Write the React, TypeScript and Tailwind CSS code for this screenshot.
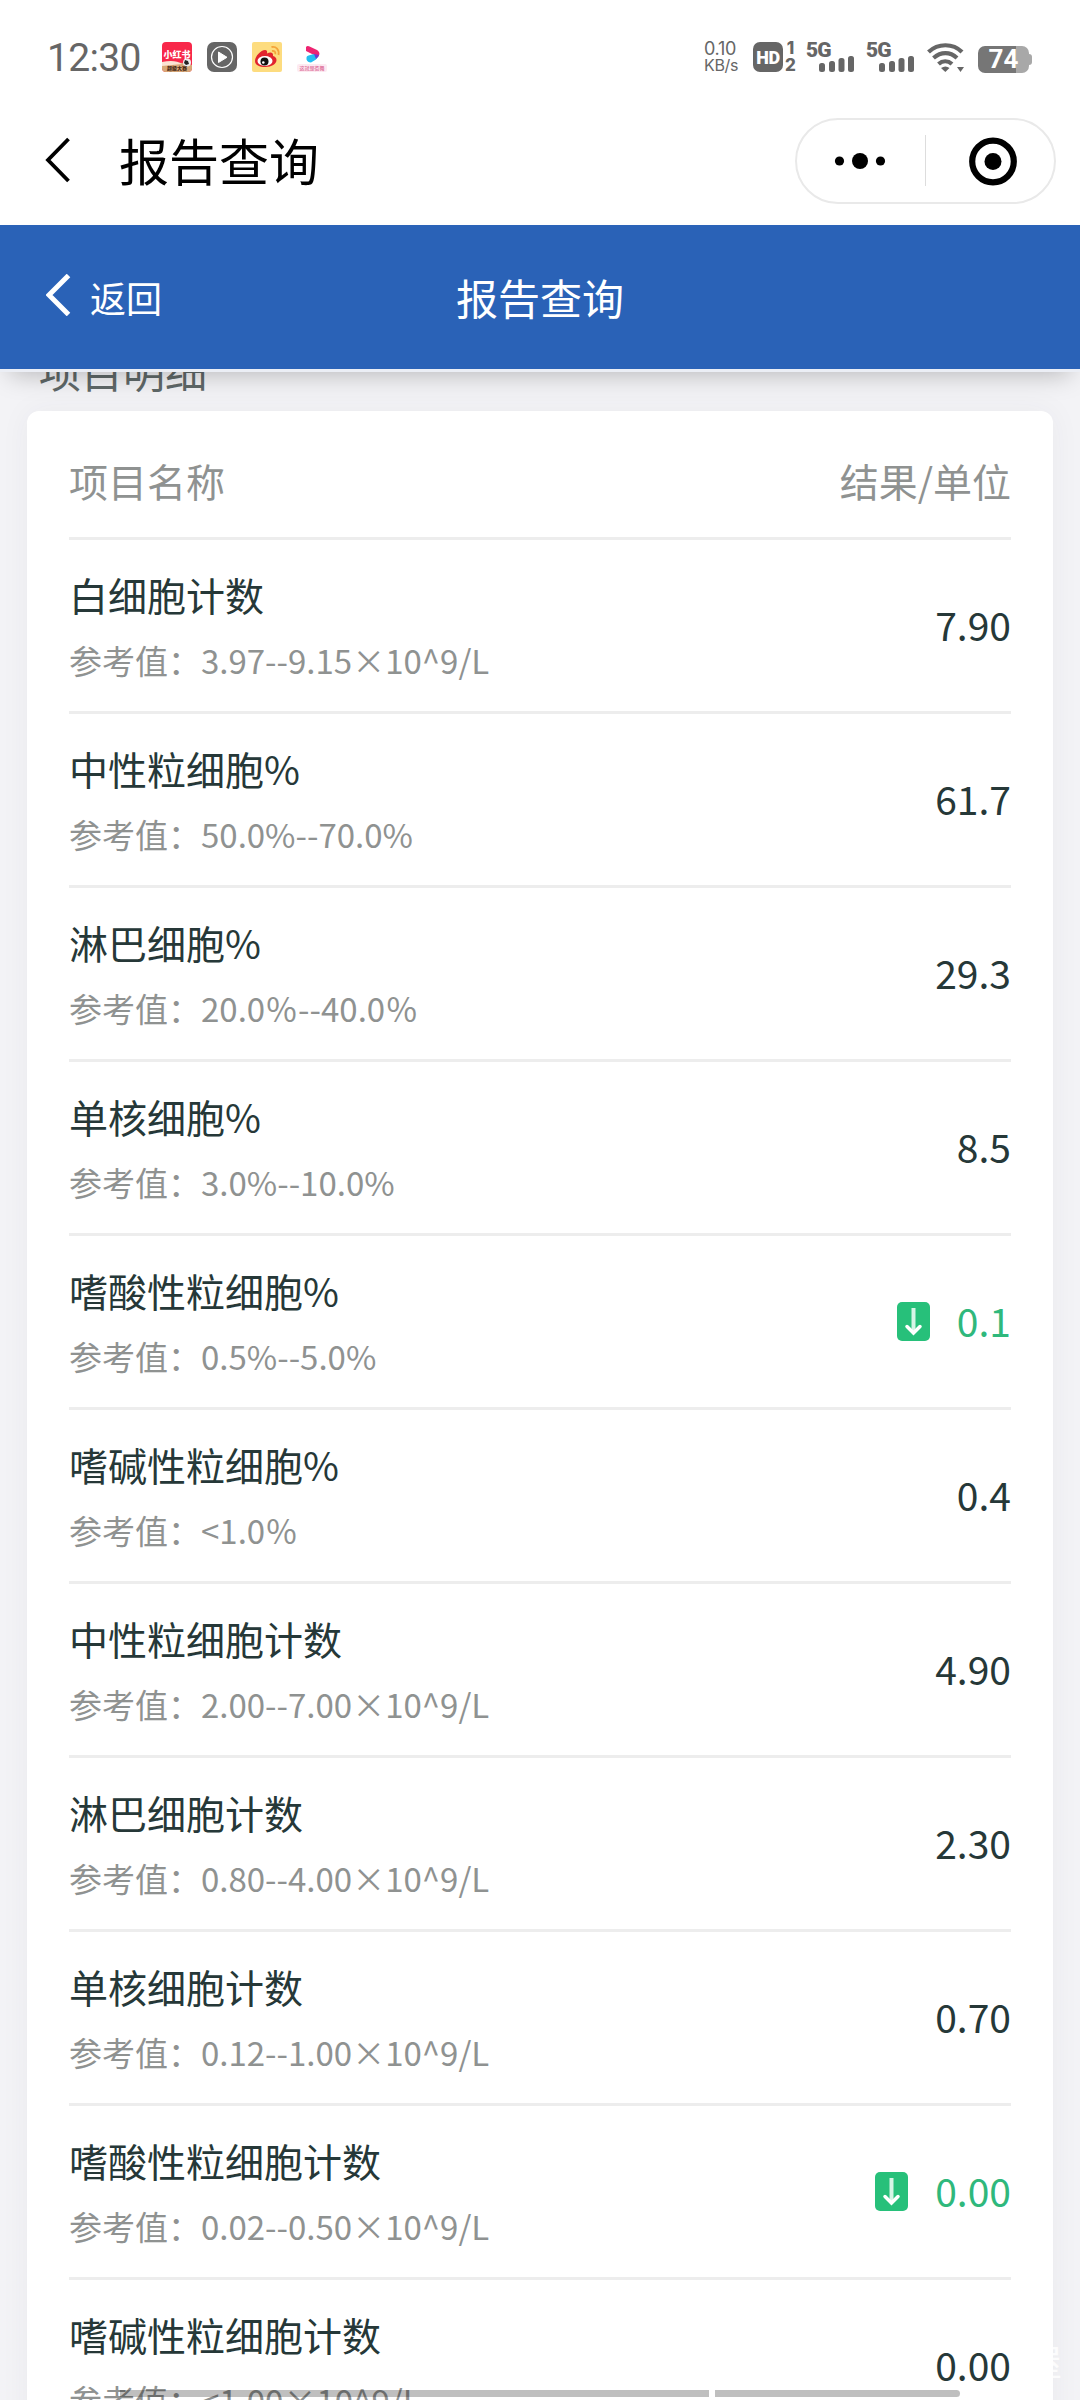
import clsx from "clsx";

type Item = { name: string; range: string; value: string; low?: boolean };

const items: Item[] = [
  { name: "白细胞计数", range: "3.97--9.15×10^9/L", value: "7.90" },
  { name: "中性粒细胞%", range: "50.0%--70.0%", value: "61.7" },
  { name: "淋巴细胞%", range: "20.0％--40.0％", value: "29.3" },
  { name: "单核细胞%", range: "3.0%--10.0%", value: "8.5" },
  { name: "嗜酸性粒细胞%", range: "0.5%--5.0%", value: "0.1", low: true },
  { name: "嗜碱性粒细胞%", range: "<1.0％", value: "0.4" },
  { name: "中性粒细胞计数", range: "2.00--7.00×10^9/L", value: "4.90" },
  { name: "淋巴细胞计数", range: "0.80--4.00×10^9/L", value: "2.30" },
  { name: "单核细胞计数", range: "0.12--1.00×10^9/L", value: "0.70" },
  { name: "嗜酸性粒细胞计数", range: "0.02--0.50×10^9/L", value: "0.00", low: true },
  { name: "嗜碱性粒细胞计数", range: "<1.00×10^9/L", value: "0.00" },
];

function Signal() {
  return (
    <div className="relative h-[30px] w-[48px]">
      <span className="absolute -top-[1px] -left-px font-['Roboto',sans-serif] text-[21px] leading-[18px] font-black tracking-[-0.8px]">5G</span>
      <svg viewBox="0 0 48 30" className="absolute inset-0" fill="currentColor">
        <rect x="12" y="21" width="6" height="9" rx="2.5" />
        <rect x="22" y="19" width="6" height="11" rx="2.5" />
        <rect x="31.500" y="16" width="6" height="14" rx="2.5" />
        <rect x="41" y="14" width="6" height="16" rx="2.5" />
      </svg>
    </div>
  );
}

function AppIcons() {
  return (
    <div className="flex gap-[15px]">
      <svg viewBox="0 0 30 30" className="size-[30px]">
        <defs>
          <clipPath id="rednote"><rect width="30" height="30" rx="4" /></clipPath>
        </defs>
        <g clipPath="url(#rednote)">
          <rect width="30" height="30" fill="#f8284a" />
          <path d="M0 22Q13 18 30 23V30H0Z" fill="#d8a878" />
          <path d="M0 20Q13 17 20 22L0 24Z" fill="#fbe3d3" />
          <circle cx="25" cy="20.500" r="4" fill="#eee" />
          <path d="M23 18l3 1 1 3-3 1-2-2z" fill="#222" />
        </g>
        <text x="15" y="15.500" textAnchor="middle" fontSize="9" fontWeight="900" fill="#fff" fontFamily="Noto Sans CJK SC">小红书</text>
        <text x="15" y="28" textAnchor="middle" fontSize="5" fontWeight="900" fill="#4a2c17" fontFamily="Noto Sans CJK SC">超级大赛</text>
      </svg>
      <svg viewBox="0 0 30 30" className="size-[30px]">
        <rect width="30" height="30" rx="7" fill="#666" />
        <circle cx="15" cy="15" r="10.500" fill="none" stroke="#fff" strokeWidth="1.200" />
        <path d="M11.500 10v10.500l8.500-5.200z" fill="#fff" stroke="#fff" strokeLinejoin="round" />
      </svg>
      <svg viewBox="0 0 30 30" className="size-[30px]">
        <rect width="30" height="30" rx="2" fill="#fddc7f" />
        <path d="M3 19C3 14 9 8 13 8c2 0 2.500 1.500 2 3.500 3-1.500 6.500-1.500 6 2.500 2 .6 3.500 2 3.500 4 0 4-5 7-11 7S3 23 3 19Z" fill="#e1232e" />
        <ellipse cx="13" cy="19" rx="7.500" ry="5" fill="#fff" />
        <circle cx="12.500" cy="19.500" r="4" fill="#111" />
        <circle cx="11.300" cy="20.500" r="1.300" fill="#fff" />
        <path d="M19.500 5c4.500-1 8 2.500 7 8M20 9c2.500-.5 3.800 1 3.300 3.300" fill="none" stroke="#f4a43a" strokeWidth="1.800" />
      </svg>
      <svg viewBox="0 0 30 30" className="size-[30px]">
        <rect y="22" width="30" height="8" rx="2" fill="#fdeaf1" />
        <path d="M9 5q1-1.500 3-.8L20 8q3 2 2.300 4.500L21 15 9 9Z" fill="#ee2471" />
        <path d="M9.500 15.500q0-1.500 2-2L17 12l4 2.500-2 3-5 3q-3.500 0-4.500-3Z" fill="#24bff0" />
        <path d="M17 12l5 1q-.5 2.500-3 4z" fill="#6b3bd0" />
        <text x="15" y="27.500" textAnchor="middle" fontSize="5" fontWeight="500" fill="#dc6c98" fontFamily="Noto Sans CJK SC">这就是街舞</text>
      </svg>
    </div>
  );
}

function StatusBar() {
  return (
    <div className="flex h-[115px] items-start justify-between pr-12 pl-[47px] text-[#666]">
      <div className="flex items-start pt-[42px]">
        <span className="w-[115px] pt-px font-['Roboto',sans-serif] text-[39px] leading-[30px] tracking-[-0.7px]">12:30</span>
        <AppIcons />
      </div>
      <div className="flex pt-[42px]">
        <div className="mr-[14px] w-[35px] font-['Inter',sans-serif] text-[18px] leading-[16px] tracking-[-0.3px] whitespace-nowrap">
          <div className="-mt-px">0.10</div>
          <div className="text-[16px]">KB/s</div>
        </div>
        <div className="flex size-[30px] items-center justify-center rounded-[7px] bg-[#666] font-['Roboto',sans-serif] text-[18px] font-black tracking-[-0.5px] text-white">
          HD
        </div>
        <div className="mr-[11px] ml-0.5 w-[11px] text-center font-['Inter',sans-serif] text-[17px] leading-[17px] font-extrabold">
          <div className="-mt-0.5">1</div>
          <div>2</div>
        </div>
        <div className="mr-[12px]"><Signal /></div>
        <Signal />
        <svg viewBox="0 0 38 30" className="ml-[12px] h-[30px] w-[38px]" fill="none" stroke="currentColor" strokeWidth="4.200">
          <path d="M1.500 10C11 1 26 1 35 10" />
          <path d="M6.500 16C14 9.500 23 9.500 30 16" />
          <path d="M11.500 22C15.500 18.500 21 18.500 25 22" />
          <path d="M14 26q4.500-3 8.500 0l-4.200 4z" fill="currentColor" stroke="none" />
          <path d="M30 25h7l-3.500 5z" fill="currentColor" stroke="none" />
        </svg>
        <div className="mt-[3px] ml-[13px] flex items-center">
          <div className="flex h-[27px] w-[51px] items-center justify-center rounded-[7px] bg-[linear-gradient(90deg,#767676_38px,#a8a8a8_38px)] font-['Roboto',sans-serif] text-[26px] font-bold text-white">
            74
          </div>
          <div className="h-[11px] w-[3px] rounded-r-sm bg-[#a8a8a8]" />
        </div>
      </div>
    </div>
  );
}

function TitleBar() {
  return (
    <div className="flex h-[110px] items-start pl-[45px]">
      <svg viewBox="0 0 26 46" className="mt-[22px] h-[46px] w-[26px]" fill="none" stroke="#000" strokeWidth="3.800">
        <path d="M23.500 2L3 23l20.500 21" />
      </svg>
      <h1 className="ml-[48px] text-[50px] leading-[88px] text-black">报告查询</h1>
      <div className="mt-[3px] mr-[24px] ml-auto flex h-[86px] w-[261px] items-center rounded-full border-2 border-[#e9e9e9]">
        <svg viewBox="0 0 256 82" className="h-[82px] w-[256px]">
          <circle cx="42.500" cy="41" r="4.600" />
          <circle cx="63" cy="41" r="8" />
          <circle cx="83.500" cy="41" r="4.600" />
          <path d="M128.500 15v51" stroke="#ddd" />
          <circle cx="196" cy="41.500" r="20.800" fill="none" stroke="#000" strokeWidth="6.200" />
          <circle cx="196" cy="41.500" r="8.500" />
        </svg>
      </div>
    </div>
  );
}

function NavBar() {
  return (
    <div className="relative z-10 grid h-[147px] grid-cols-3 items-center border-b-[3px] border-[#ebeef5] bg-[#2a62b7] text-white shadow-[0_12px_24px_-10px_rgba(0,0,0,0.26)]">
      <div className="flex items-center pl-[46px]">
        <svg viewBox="0 0 25 42" className="-mt-[4px] h-[42px] w-[25px]" fill="none" stroke="currentColor" strokeWidth="5">
          <path d="M22.500 1.500L3 21l19.500 19.500" />
        </svg>
        <span className="ml-[19px] text-[36px]">返回</span>
      </div>
      <div className="-mt-0.5 text-center text-[42px]">报告查询</div>
    </div>
  );
}

function LowIcon() {
  return (
    <svg viewBox="0 0 33 39" className="mr-[27px] h-[39px] w-[33px]">
      <rect width="33" height="39" rx="5" fill="#27c07a" />
      <path d="M16.500 6v24" stroke="#d6f5e6" strokeWidth="4" />
      <path d="M10 24.500l6.500 6.500 6.500-6.500" fill="none" stroke="#fff" strokeWidth="3.500" strokeLinecap="round" />
    </svg>
  );
}

function Row({ item }: { item: Item }) {
  return (
    <li className="flex h-[174px] items-center justify-between border-b-[3px] border-[#ededed]">
      <div className="pt-[3px]">
        <p className="text-[39px] leading-[65px] text-[#263838]">{item.name}</p>
        <p className="text-[33px] leading-[66px] text-[#8f9291]">参考值：{item.range}</p>
      </div>
      <div className={clsx("flex items-center text-[39px]", item.low ? "text-[#2fb87c]" : "text-[#263838]")}>
        {item.low && <LowIcon />}
        <span className="-mt-[3px]">{item.value}</span>
      </div>
    </li>
  );
}

export default function App() {
  return (
    <div className="relative flex h-[2400px] w-[1080px] flex-col overflow-hidden bg-white font-['Noto_Sans_CJK_SC',sans-serif]">
      <StatusBar />
      <TitleBar />
      <NavBar />
      <main className="min-h-0 flex-1 overflow-hidden bg-[#f3f3f6] px-[27px]">
        <h2 className="-mt-[36px] h-[75px] pl-[12px] text-[42px] leading-[68px] text-[#5f6868]">项目明细</h2>
        <section className="rounded-xl bg-white px-[42px] shadow-[0_0_30px_rgba(60,60,80,0.05)]">
          <div className="flex h-[129px] items-center justify-between border-b-[3px] border-[#ededed] pt-3 text-[39px] text-[#8f9291]">
            <span>项目名称</span>
            <span>结果/单位</span>
          </div>
          <ul>
            {items.map((item) => (
              <Row key={item.name} item={item} />
            ))}
          </ul>
        </section>
      </main>
      <span className="absolute right-[18px] bottom-[18px] text-[36px] leading-[44px] text-white/80">屋</span>
      <div className="absolute bottom-[3px] left-[120px] flex gap-1.5">
        <div className="h-[7px] w-[589px] bg-black/25" />
        <div className="h-[7px] w-[245px] rounded-r-full bg-black/25" />
      </div>
    </div>
  );
}
